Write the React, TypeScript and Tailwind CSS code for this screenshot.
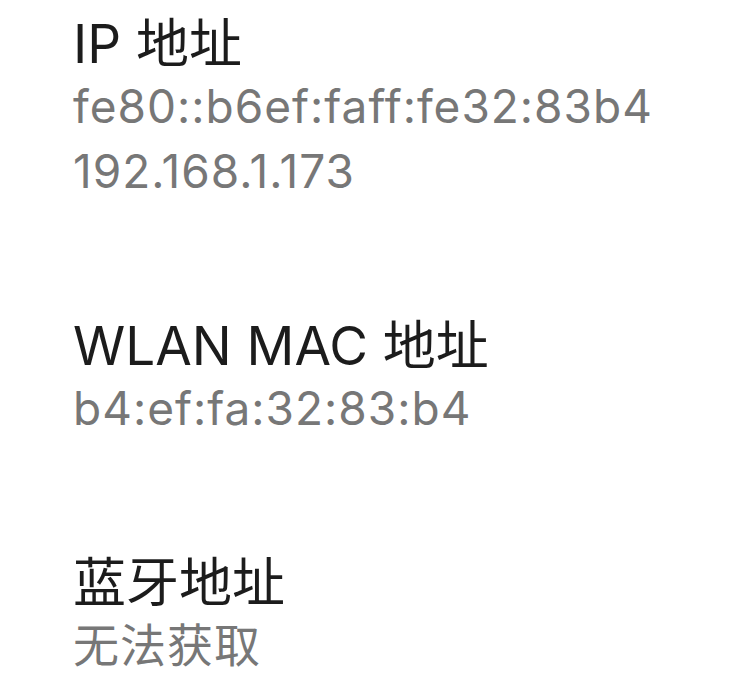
const sections = [
  { title: 'IP 地址', values: ['fe80::b6ef:faff:fe32:83b4', '192.168.1.173'] },
  { title: 'WLAN MAC 地址', values: ['b4:ef:fa:32:83:b4'] },
  { title: '蓝牙地址', values: ['无法获取'] },
];

export default function App() {
  return (
    <div
      className="min-h-[682px] w-full bg-white pl-[73px] pt-[14px]"
      style={{ fontFamily: 'Inter, "Noto Sans CJK SC", sans-serif' }}
    >
      <div className="flex flex-col gap-[112px]">
        {sections.map((s) => (
          <div key={s.title} className="flex flex-col">
            <div className="text-[53px] leading-[60px] text-[#1c1c1c]">{s.title}</div>
            {s.values.map((v) => (
              <div key={v} className="text-[46px] leading-[65px] tracking-[1px] text-[#777777]">
                {v}
              </div>
            ))}
          </div>
        ))}
      </div>
    </div>
  );
}
